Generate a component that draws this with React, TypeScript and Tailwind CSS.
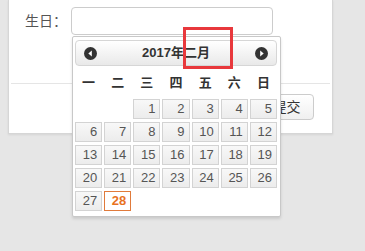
import React from "react";

const weekdays = ["一", "二", "三", "四", "五", "六", "日"];

function Arrow({ dir }: { dir: "left" | "right" }) {
  return (
    <svg width="13" height="13" viewBox="0 0 13 13">
      <circle cx="6.5" cy="6.5" r="6.5" fill="#333" />
      {dir === "left" ? (
        <polygon points="7.8,3.5 7.8,9.5 4.3,6.5" fill="#fff" />
      ) : (
        <polygon points="5.2,3.5 5.2,9.5 8.7,6.5" fill="#fff" />
      )}
    </svg>
  );
}

export default function App() {
  const cells: (number | null)[] = [null, null];
  for (let d = 1; d <= 28; d++) cells.push(d);
  const rows: (number | null)[][] = [];
  for (let i = 0; i < cells.length; i += 7) rows.push(cells.slice(i, i + 7));

  return (
    <div
      className="relative w-[365px] h-[251px] bg-[#e6e6e6] overflow-hidden"
      style={{ fontFamily: '"Liberation Sans", "Noto Sans CJK SC", sans-serif' }}
    >
      <div className="ml-2 w-[325px] h-[134px] bg-white border-x border-b border-[#d6d6d6] shadow-[0_1px_2px_rgba(0,0,0,0.08)] flex flex-col">
        <div className="flex items-center pt-[7px] pl-4">
          <span className="text-[14px] text-[#555] w-[46px]">生日：</span>
          <div className="w-[202px] h-[28px] border border-[#ccc] rounded-[4px] bg-white" />
        </div>
        <div className="mt-[48px] mx-[2px] h-px bg-[#e5e5e5]" />
        <div className="flex mt-[10px] pl-[250px]">
          <div className="w-[55px] h-[26px] border border-[#ccc] rounded-[4px] bg-gradient-to-b from-white to-[#f0f0f0] text-[14px] text-[#333] flex items-center justify-center">
            提交
          </div>
        </div>
      </div>

      {/* calendar popup */}
      <div className="absolute left-[72px] top-[36px] w-[209px] h-[181px] bg-white border border-[#c8c8c8] rounded-[2px] shadow-[0_2px_3px_rgba(0,0,0,0.12)] pt-[3px] pl-[2px] pr-[3px]">
        <div className="h-[26px] border border-[#d6d6d6] rounded-[4px] bg-gradient-to-b from-white to-[#e9e9e9] flex items-center justify-between px-[8px]">
          <Arrow dir="left" />
          <span className="text-[13px] font-bold text-[#333]">2017年二月</span>
          <Arrow dir="right" />
        </div>
        <div className="grid grid-cols-7 gap-x-[2px] h-[33px] items-center">
          {weekdays.map((w) => (
            <div key={w} className="text-center text-[13px] font-bold text-[#333]">
              {w}
            </div>
          ))}
        </div>
        <div className="flex flex-col gap-[3px]">
          {rows.map((r, i) => (
            <div key={i} className="grid grid-cols-7 gap-x-[2px]">
              {Array.from({ length: 7 }).map((_, j) => {
                const d = r[j];
                if (d == null) return <div key={j} className="h-[20px]" />;
                if (d === 28)
                  return (
                    <div
                      key={j}
                      className="h-[20px] border border-[#e07a3b] bg-white text-[#e8721f] font-bold text-[13px] flex items-center justify-end pr-[4px]"
                    >
                      {d}
                    </div>
                  );
                return (
                  <div
                    key={j}
                    className="h-[20px] border border-[#d3d3d3] bg-gradient-to-b from-[#f8f8f8] to-[#ececec] text-[#555] text-[13px] flex items-center justify-end pr-[4px]"
                  >
                    {d}
                  </div>
                );
              })}
            </div>
          ))}
        </div>
      </div>

      {/* red highlight box */}
      <div className="absolute left-[183px] top-[27px] w-[50px] h-[42px] border-[3px] border-[#e8383c]" />
    </div>
  );
}
